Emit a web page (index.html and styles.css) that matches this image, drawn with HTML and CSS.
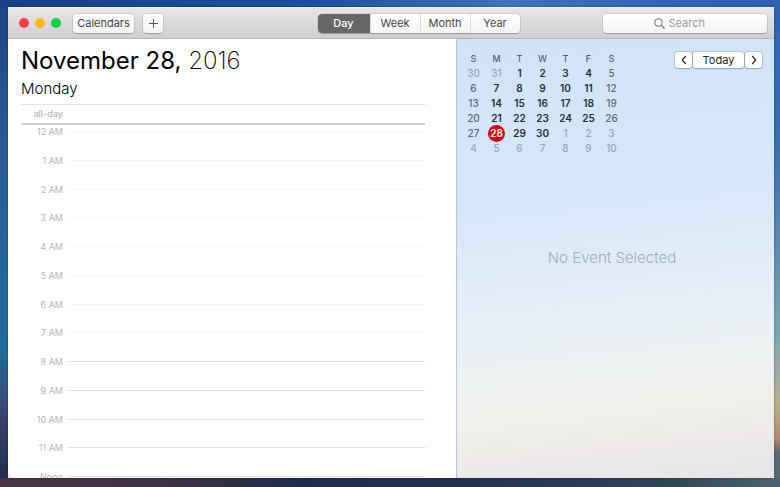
FILE: index.html
```html
<!DOCTYPE html>
<html lang="en">
<head>
<meta charset="utf-8">
<title>Calendar</title>
<link rel="stylesheet" href="styles.css">
</head>
<body>
<div class="window">
  <header class="toolbar">
    <div class="toolbar-left">
      <div class="lights">
        <button class="light light-close" aria-label="Close"></button>
        <button class="light light-minimize" aria-label="Minimize"></button>
        <button class="light light-zoom" aria-label="Zoom"></button>
      </div>
      <button class="button button-calendars">Calendars</button>
      <button class="button button-add" aria-label="Add event">
        <svg width="9" height="9" viewBox="0 0 9 9"><path d="M4.5 0v9M0 4.5h9" stroke="#555" fill="none"/></svg>
      </button>
    </div>
    <nav class="views">
      <button class="view view-active">Day</button>
      <button class="view">Week</button>
      <button class="view">Month</button>
      <button class="view">Year</button>
    </nav>
    <div class="toolbar-right">
      <label class="search">
        <svg width="11" height="11" viewBox="0 0 11 11"><circle cx="4.5" cy="4.5" r="3.8" stroke="#666" fill="none"/><path d="M7.3 7.3l3.2 3.2" stroke="#666" stroke-width="1.2"/></svg>
        <input type="search" placeholder="Search" aria-label="Search">
      </label>
    </div>
  </header>
  <div class="content">
    <main class="day">
      <h1 class="date">November 28, <span class="year">2016</span></h1>
      <h2 class="weekday">Monday</h2>
      <div class="all-day"><span class="label">all-day</span></div>
      <div class="hours">
        <div class="hour hour-off"><span class="label">12 AM</span></div>
        <div class="hour hour-off"><span class="label">1 AM</span></div>
        <div class="hour hour-off"><span class="label">2 AM</span></div>
        <div class="hour hour-off"><span class="label">3 AM</span></div>
        <div class="hour hour-off"><span class="label">4 AM</span></div>
        <div class="hour hour-off"><span class="label">5 AM</span></div>
        <div class="hour hour-off"><span class="label">6 AM</span></div>
        <div class="hour hour-off"><span class="label">7 AM</span></div>
        <div class="hour"><span class="label">8 AM</span></div>
        <div class="hour"><span class="label">9 AM</span></div>
        <div class="hour"><span class="label">10 AM</span></div>
        <div class="hour"><span class="label">11 AM</span></div>
        <div class="hour"><span class="label">Noon</span></div>
      </div>
    </main>
    <aside class="side">
      <div class="side-top">
        <table class="month">
          <thead>
            <tr><th>S</th><th>M</th><th>T</th><th>W</th><th>T</th><th>F</th><th>S</th></tr>
          </thead>
          <tbody>
            <tr><td class="out">30</td><td class="out">31</td><td>1</td><td>2</td><td>3</td><td>4</td><td>5</td></tr>
            <tr><td>6</td><td>7</td><td>8</td><td>9</td><td>10</td><td>11</td><td>12</td></tr>
            <tr><td>13</td><td>14</td><td>15</td><td>16</td><td>17</td><td>18</td><td>19</td></tr>
            <tr><td>20</td><td>21</td><td>22</td><td>23</td><td>24</td><td>25</td><td>26</td></tr>
            <tr><td>27</td><td><span class="today">28</span></td><td>29</td><td>30</td><td class="out">1</td><td class="out">2</td><td class="out">3</td></tr>
            <tr><td class="out">4</td><td class="out">5</td><td class="out">6</td><td class="out">7</td><td class="out">8</td><td class="out">9</td><td class="out">10</td></tr>
          </tbody>
        </table>
        <div class="pager">
          <button class="page" aria-label="Previous day"><svg width="6" height="10" viewBox="0 0 6 10"><path d="M4.8 1L1.2 5l3.6 4" stroke="#222" stroke-width="1.2" fill="none"/></svg></button>
          <button class="page page-today">Today</button>
          <button class="page" aria-label="Next day"><svg width="6" height="10" viewBox="0 0 6 10"><path d="M1.2 1l3.6 4-3.6 4" stroke="#222" stroke-width="1.2" fill="none"/></svg></button>
        </div>
      </div>
      <p class="empty">No Event Selected</p>
    </aside>
  </div>
</div>
</body>
</html>
```
FILE: styles.css
```css
* {
  box-sizing: border-box;
}

body {
  margin: 0;
  height: 100vh;
  padding: 7px 6px 9px 8px;
  overflow: hidden;
  font-family: Inter, "Liberation Sans", sans-serif;
  background:
    linear-gradient(90deg, #4b3447 0, #3f3044 20%, #1f2d4d 38%, #22324f 60%, #2b4559 85%, #4a6570 100%) bottom / 100% 9px no-repeat,
    linear-gradient(90deg, #164088, #1d4f9e 40%, #4272bc 65%, #3265b5 85%, #2d5fae) top / 100% 7px no-repeat,
    linear-gradient(#2f62b3, #3a6fae 30%, #5f86b0 48%, #7fa8b4 70%, #b9b08c 83%, #b58a6c 90%, #566a74 93%) right / 6px 100% no-repeat,
    linear-gradient(#1b4588, #2a5f98 35%, #1f6c9c 72%, #3b4570 85%, #1c2c50) left / 8px 100% no-repeat;
}

button,
input {
  margin: 0;
  padding: 0;
  border: 0;
  font: inherit;
}

.window {
  display: flex;
  flex-direction: column;
  height: 100%;
  overflow: hidden;
  border-radius: 5px;
  background: #fff;
  box-shadow: 0 0 2px rgba(0, 0, 0, 0.5);
}

.toolbar {
  display: grid;
  grid-template-columns: 298fr auto 247fr;
  align-items: center;
  flex: none;
  height: 32px;
  padding: 0 7px 0 11px;
  border-top: 1px solid #f4f2f4;
  border-bottom: 1px solid #b9b6b9;
  background: linear-gradient(#e8e5e8, #d1ced1);
  font-size: 11px;
}

.toolbar-left,
.toolbar-right,
.lights {
  display: flex;
  align-items: center;
}

.lights {
  gap: 6px;
  margin-right: 12px;
}

.light {
  width: 10px;
  height: 10px;
  border-radius: 50%;
}

.light-close {
  background: #fc4045;
}

.light-minimize {
  background: #fdb90b;
}

.light-zoom {
  background: #08d144;
}

.button,
.views,
.search {
  height: 19px;
  border-radius: 4px;
  background: linear-gradient(#fff, #f4f4f4);
  box-shadow: 0 0 0 1px rgba(0, 0, 0, 0.08), 0 1px 1px rgba(0, 0, 0, 0.2);
  color: #444;
}

.button-calendars {
  width: 61px;
  margin-right: 9px;
}

.button-add {
  display: flex;
  align-items: center;
  justify-content: center;
  width: 20px;
}

.views {
  display: flex;
  overflow: hidden;
}

.view {
  width: 50px;
  border-left: 1px solid #ddd;
  background: none;
  color: #444;
}

.view-active {
  width: 52px;
  border-left: 0;
  background: #676767;
  color: #fff;
  font-weight: 500;
}

.toolbar-right {
  justify-content: flex-end;
}

.search {
  display: flex;
  align-items: center;
  justify-content: center;
  gap: 4px;
  width: 164px;
}

.search input {
  width: 48px;
  background: none;
  outline: 0;
}

.search input::placeholder {
  color: #999;
  opacity: 1;
}

.content {
  display: grid;
  flex: 1;
  grid-template-columns: minmax(0, 448fr) minmax(0, 318fr);
  grid-template-rows: minmax(0, 1fr);
  min-height: 0;
}

.day {
  display: flex;
  flex-direction: column;
  padding: 6px 31px 0 13px;
}

.date,
.weekday {
  margin: 0;
  color: #000;
}

.date {
  font-size: 24px;
  font-weight: 400;
  line-height: 32px;
}

.year {
  font-weight: 200;
}

.weekday {
  padding-bottom: 3px;
  font-size: 15px;
  font-weight: 300;
  line-height: 24px;
}

.all-day {
  flex: none;
  height: 21px;
  border-top: 1px solid #e2e2e2;
  border-bottom: 2px solid #d2d2d2;
  line-height: 18px;
}

.label {
  flex: none;
  display: block;
  width: 42px;
  color: #b4b4b4;
  font-size: 9px;
  text-align: right;
}

.all-day .label {
  font-weight: 500;
}

.hours {
  display: grid;
  flex: 1;
  grid-template-rows: repeat(12, 1fr) 8px;
  min-height: 0;
  overflow: hidden;
}

.hour {
  display: flex;
  align-items: center;
  gap: 5px;
  height: 13px;
  line-height: 13px;
}

.hour::after {
  content: "";
  flex: 1;
  height: 1px;
  background: #e0e0e0;
}

.hour-off::after {
  background: #f4f4f4;
}

.side {
  display: flex;
  flex-direction: column;
  padding: 12px 12px 0 5px;
  border-left: 1px solid #b8c8dc;
  background: linear-gradient(174deg, #d3e3f7 0, #d5e7f8 35%, #e4edf7 57%, #edf2f2 72%, #f1f0eb 83%, #ece9e8 91%, #e5e5e8 100%);
}

.side-top {
  display: flex;
  align-items: flex-start;
  justify-content: space-between;
}

.month {
  border-collapse: collapse;
  table-layout: fixed;
  width: 161px;
  color: #1f2c40;
  font-size: 10px;
  text-align: center;
}

.month th,
.month td {
  height: 15px;
  padding: 0;
  line-height: 15px;
  font-weight: 600;
}

.month th {
  color: #55627a;
  font-size: 9px;
  font-weight: 500;
}

.month td:first-child,
.month td:last-child {
  color: #5a6880;
  font-weight: 500;
}

.month .out,
.month .out:first-child,
.month .out:last-child {
  color: #98a6ba;
  font-weight: 500;
}

.today {
  display: block;
  width: 17px;
  height: 17px;
  margin: -1px auto;
  border-radius: 50%;
  background: #d8000c;
  color: #fff;
  line-height: 17px;
}

.pager {
  display: flex;
  gap: 1px;
  padding-top: 1px;
}

.page {
  display: flex;
  align-items: center;
  justify-content: center;
  width: 17px;
  height: 16px;
  border-radius: 3px;
  background: #fff;
  box-shadow: 0 0 0 1px rgba(60, 80, 110, 0.2), 0 1px 1px rgba(0, 0, 0, 0.2);
  color: #222;
  font-size: 11px;
}

.page-today {
  width: 51px;
}

.empty {
  margin: 90px 0 0;
  color: #a2adb9;
  font-size: 15px;
  font-weight: 300;
  line-height: 24px;
  text-align: center;
}
```
